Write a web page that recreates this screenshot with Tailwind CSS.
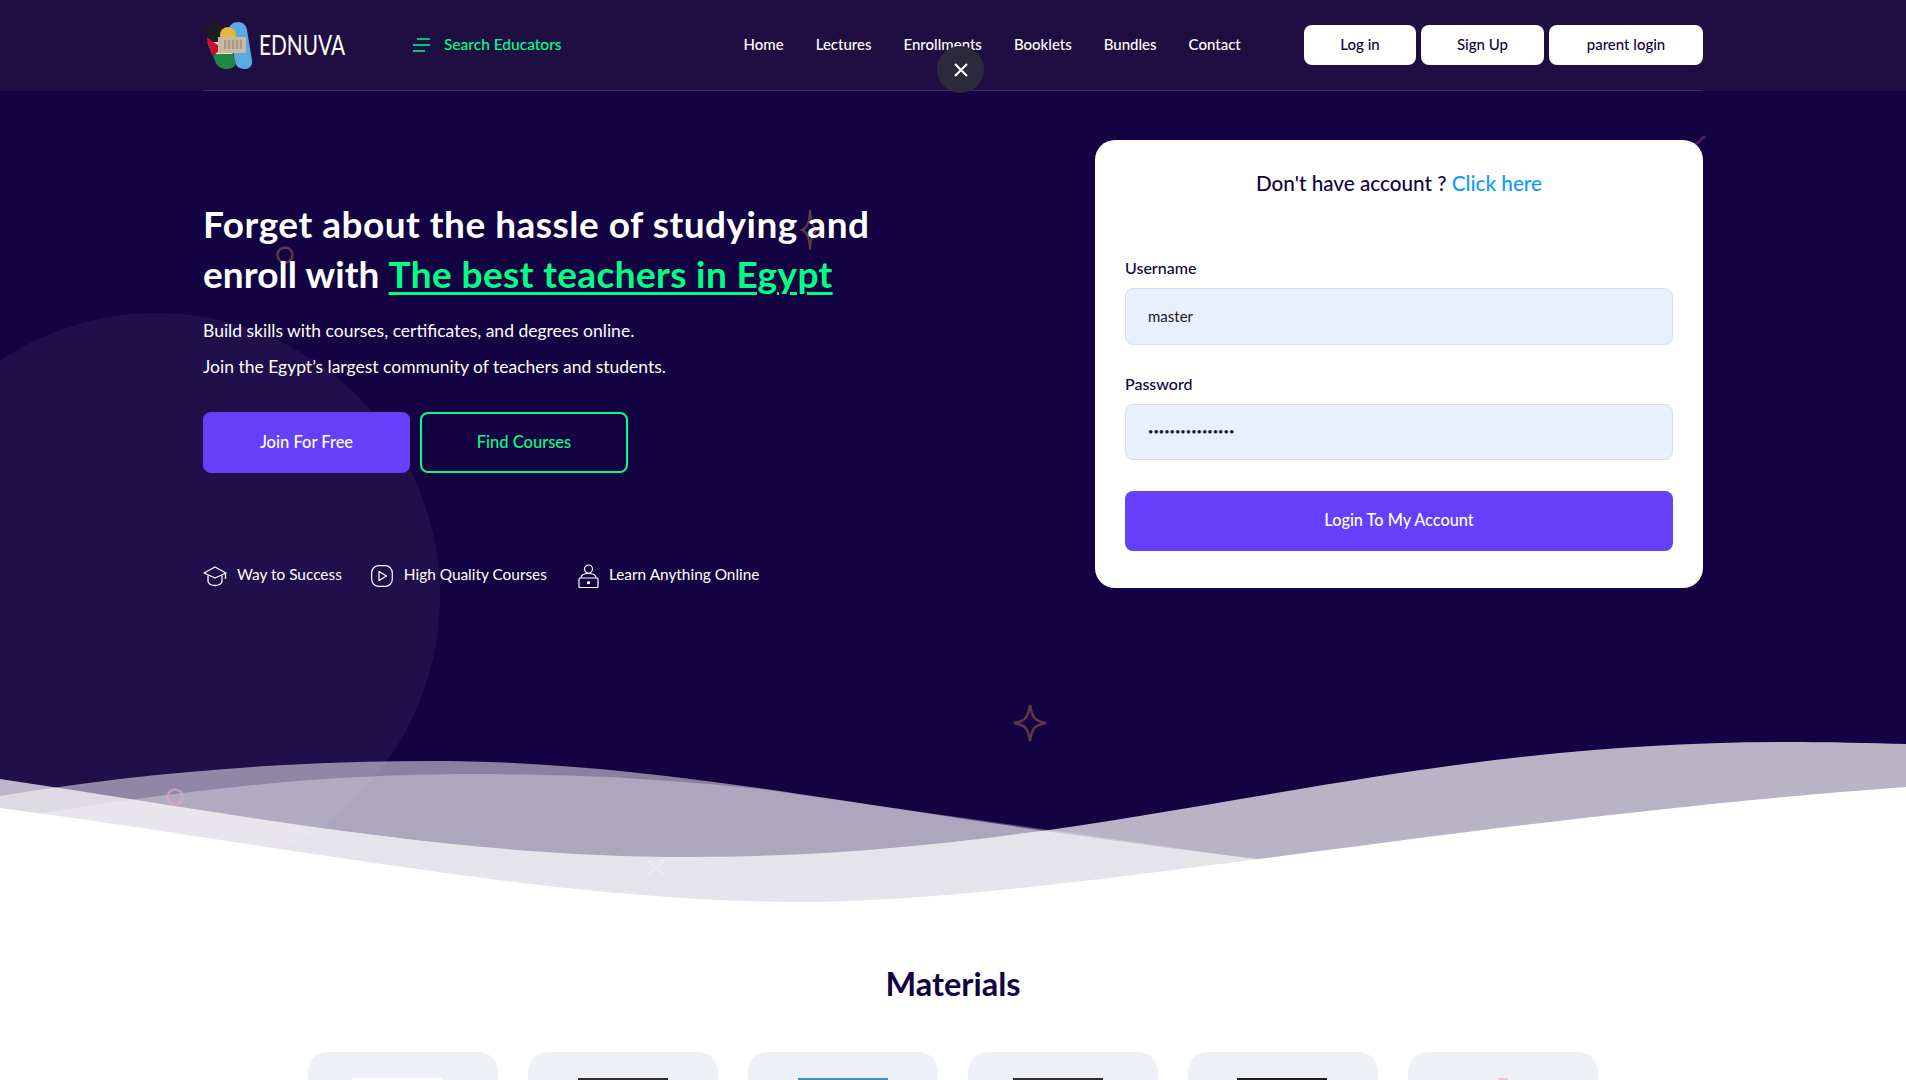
<!DOCTYPE html>
<html lang="en">
<head>
  <meta charset="UTF-8">
  <meta name="viewport" content="width=device-width, initial-scale=1.0">
  <title>Ednuva</title>
  <script src="https://cdn.jsdelivr.net/npm/@tailwindcss/browser@4"></script>
</head>
<body class="h-[1080px] overflow-hidden bg-white font-['Lato',sans-serif] text-[#140342]">

  <!-- dark top part, the waves close it off at the bottom -->
  <div class="relative h-[910px] bg-[#140342]">

    <svg class="absolute left-0 top-0" width="1906" height="910" viewBox="0 0 1906 910" fill="none">
      <circle cx="157" cy="596" r="283" fill="#ffffff" fill-opacity="0.05"/>
      <path d="M810 210C811 224 813 228 818 230C813 232 811 236 810 250C809 236 807 232 802 230C807 228 809 224 810 210Z" stroke="#5e3a44" stroke-width="2"/>
      <circle cx="285" cy="255" r="7.5" stroke="#5e3a44" stroke-width="2.5"/>
      <path d="M1030 705C1032 717 1034 721 1046 723C1034 725 1032 729 1030 741C1028 729 1026 725 1014 723C1026 721 1028 717 1030 705Z" stroke="#5e3a44" stroke-width="2.5"/>
      <path d="M1695 145L1705 136" stroke="#5a1d5c" stroke-width="2.5"/>
      <path d="M0 779C230 813 450 857 690 857C1110 857 1365 742 1785 742C1830 742 1870 743 1906 744L1906 910L0 910Z" fill="#ffffff" fill-opacity="0.7"/>
      <path d="M0 796C130 774 280 761 430 761C680 761 880 815 1267 860L1300 910L0 910Z" fill="#ffffff" fill-opacity="0.5"/>
      <path d="M0 820C150 795 300 774 470 774C600 774 680 781 760 789C850 802 1050 830 1267 861L1300 910L0 910Z" fill="#ffffff" fill-opacity="0.3"/>
      <circle cx="175" cy="797" r="7.5" stroke="#e8a9d2" stroke-opacity="0.6" stroke-width="2.5"/>
      <path d="M0 808C280 845 560 902 800 902C1050 902 1450 820 1906 787L1906 910L0 910Z" fill="#ffffff"/>
      <path d="M648 860L664 875M664 860L648 875" stroke="#e9ebf0" stroke-width="3"/>
    </svg>

    <header class="relative bg-[#1e0e42]">
      <div class="mx-auto flex h-[91px] w-[1500px] items-center border-b border-[#3d2f60]">
        <div class="flex w-[210px] items-center">
          <svg width="48" height="48" viewBox="0 0 48 48" class="ml-[2px] mt-[1px]">
            <defs>
              <clipPath id="leftPill"><path d="M1 10C0 3 5 0 9 0C14 0 17 2 19 8L30 38C32 44 27 47 23 47C17 47 13 45 11 41L3 22Z"/></clipPath>
              <clipPath id="rightPill"><path d="M24 8C24 3 28 0 33 0C38 0 41 3 42 8L47 38C48 44 44 47 40 47C35 47 31 45 30 40Z"/></clipPath>
            </defs>
            <g clip-path="url(#rightPill)">
              <rect width="48" height="48" fill="#5aa9e0"/>
            </g>
            <g clip-path="url(#leftPill)">
              <rect width="48" height="20" fill="#1c1c20"/>
              <rect y="20" width="48" height="12" fill="#e8e4dc"/>
              <rect y="32" width="48" height="16" fill="#1f8a3f"/>
              <path d="M0 14L17 26L4 38L0 38Z" fill="#c8102e"/>
            </g>
            <circle cx="23" cy="13" r="8" fill="#e2b93b"/>
            <rect x="13" y="15" width="28" height="16" fill="#c9b9a0"/>
            <rect x="19" y="18" width="18" height="9" fill="#a89a86"/>
            <path d="M22 18V27M26 18V27M30 18V27M34 18V27" stroke="#d9ccb6" stroke-width="1"/>
          </svg>
          <span class="ml-[6px] origin-left scale-x-80 text-[26px] font-normal leading-none text-white">EDNUVA</span>
        </div>
        <div class="mb-[1px] flex items-center text-[#00ff84]">
          <svg width="17" height="14" viewBox="0 0 17 14" fill="none" stroke="currentColor" stroke-width="1.6">
            <path d="M4 1H17M0 7H17M0 13H12"/>
          </svg>
          <span class="ml-[14px] text-[15.5px] font-medium">Search Educators</span>
        </div>
        <nav class="mb-[2px] ml-[182px] flex gap-[32px] text-[15px] font-medium text-white">
          <a href="#">Home</a>
          <a href="#">Lectures</a>
          <a href="#">Enrollments</a>
          <a href="#">Booklets</a>
          <a href="#">Bundles</a>
          <a href="#">Contact</a>
        </nav>
        <div class="ml-auto flex gap-[5px] text-[15px] font-medium">
          <a href="#" class="flex h-[40px] w-[112px] items-center justify-center rounded-lg bg-white pb-[2px]">Log in</a>
          <a href="#" class="flex h-[40px] w-[123px] items-center justify-center rounded-lg bg-white pb-[2px]">Sign Up</a>
          <a href="#" class="flex h-[40px] w-[154px] items-center justify-center rounded-lg bg-white pb-[2px]">parent login</a>
        </div>
      </div>
    </header>

    <button class="absolute left-[937px] top-[46px] flex h-[47px] w-[47px] items-center justify-center rounded-full bg-[#2c2a3a]">
      <svg width="16" height="16" viewBox="0 0 16 16" fill="none" stroke="#ffffff" stroke-width="2"><path d="M2 2L14 14M14 2L2 14"/></svg>
    </button>

    <section class="relative mx-auto flex w-[1500px] justify-between">
      <div class="pt-[108px] text-white">
        <h1 class="text-[37px] font-bold leading-[50px]">
          <span class="tracking-[0.5px]">Forget about the hassle of studying and</span><br>
          <span class="tracking-[0.1px]">enroll with</span> <span class="text-[#00ff84] underline decoration-[3px] underline-offset-[4px] tracking-[0.37px]">The best teachers in Egypt</span>
        </h1>
        <p class="mt-[14px] text-[17.5px] font-normal leading-[36px]">
          Build skills with courses, certificates, and degrees online.<br>
          Join the Egypt’s largest community of teachers and students.
        </p>
        <div class="mt-[27px] flex gap-[10px] text-[16.5px] font-medium">
          <a href="#" class="flex h-[61px] w-[207px] items-center justify-center rounded-lg bg-[#6440fb]">Join For Free</a>
          <a href="#" class="flex h-[61px] w-[208px] items-center justify-center rounded-lg border-2 border-[#00ff84] text-[#00ff84]">Find Courses</a>
        </div>
        <div class="mt-[91px] flex h-[24px] items-center text-[15.4px]">
          <svg width="24" height="22" viewBox="0 0 24 22" fill="none" stroke="#ffffff" stroke-width="1.3" stroke-linejoin="round">
            <path d="M12 2L1 8L12 13L23 8Z"/>
            <path d="M5 10.5V16C5 18.5 8 20.5 12 20.5C16 20.5 19 18.5 19 16V10.5"/>
            <path d="M22.5 8V14"/>
          </svg>
          <span class="mb-[2px] ml-[10px]">Way to Success</span>
          <svg class="ml-[29px]" width="22" height="22" viewBox="0 0 22 22" fill="none" stroke="#ffffff" stroke-width="1.2" stroke-linejoin="round">
            <rect x="0.7" y="0.7" width="20.6" height="20.6" rx="7"/>
            <path d="M8 6.5L15.5 11L8 15.5Z"/>
          </svg>
          <span class="mb-[2px] ml-[11px]">High Quality Courses</span>
          <svg class="ml-[31px]" width="21" height="24" viewBox="0 0 21 24" fill="none" stroke="#ffffff" stroke-width="1.2">
            <circle cx="10.5" cy="5" r="4"/>
            <path d="M3 14C3 11 6 9.5 10.5 9.5C15 9.5 18 11 18 14"/>
            <rect x="1" y="14" width="19" height="9.5" rx="1"/>
            <circle cx="10.5" cy="18.7" r="1" fill="#ffffff"/>
          </svg>
          <span class="mb-[2px] ml-[10px]">Learn Anything Online</span>
        </div>
      </div>

      <form class="mt-[49px] h-[448px] w-[608px] rounded-[20px] bg-white px-[30px] pt-[28px]">
        <p class="text-center text-[20.7px] font-medium leading-[30px]">Don't have account ? <a href="#" class="text-[#0a9bff]">Click here</a></p>
        <label class="mt-[58px] block text-[16px] font-medium leading-[24px]">Username</label>
        <input type="text" value="master" class="mt-[8px] block h-[57px] w-full rounded-lg border border-[#dbe0e8] bg-[#e8f0fe] px-[22px] pb-[2px] text-[15px] text-[#1a1a1a]">
        <label class="mt-[27px] block text-[16px] font-medium leading-[24px]">Password</label>
        <input type="password" value="master-password1" class="mt-[8px] block h-[56px] w-full rounded-lg border border-[#dbe0e8] bg-[#e8f0fe] px-[22px] pb-[2px] text-[9.3px] text-[#1a1a1a]">
        <button type="button" class="mt-[31px] h-[60px] w-full rounded-lg bg-[#6440fb] pb-[1px] text-[16.3px] font-medium text-white">Login To My Account</button>
      </form>
    </section>
  </div>

  <h2 class="mt-[54px] text-center text-[32.5px] font-bold leading-[40px] text-[#140342]">Materials</h2>

  <div class="mx-auto mt-[48px] flex w-[1290px] justify-between">
    <div class="h-[60px] w-[190px] rounded-t-[20px] bg-[#edf0f5] pl-[44px] pt-[26px]"><div class="h-[4px] w-[90px] bg-white"></div></div>
    <div class="h-[60px] w-[190px] rounded-t-[20px] bg-[#edf0f5] pl-[50px] pt-[26px]"><div class="h-[4px] w-[90px] bg-[#2e2e30]"></div></div>
    <div class="h-[60px] w-[190px] rounded-t-[20px] bg-[#edf0f5] pl-[50px] pt-[26px]"><div class="h-[4px] w-[90px] bg-[#3a8fc4]"></div></div>
    <div class="h-[60px] w-[190px] rounded-t-[20px] bg-[#edf0f5] pl-[45px] pt-[26px]"><div class="h-[4px] w-[90px] bg-[#2e2e30]"></div></div>
    <div class="h-[60px] w-[190px] rounded-t-[20px] bg-[#edf0f5] pl-[49px] pt-[26px]"><div class="h-[4px] w-[90px] bg-[#1f1f22]"></div></div>
    <div class="h-[60px] w-[190px] rounded-t-[20px] bg-[#edf0f5] pl-[90px] pt-[26px]"><div class="h-[4px] w-[10px] bg-[#f3c6d8]"></div></div>
  </div>

</body>
</html>
